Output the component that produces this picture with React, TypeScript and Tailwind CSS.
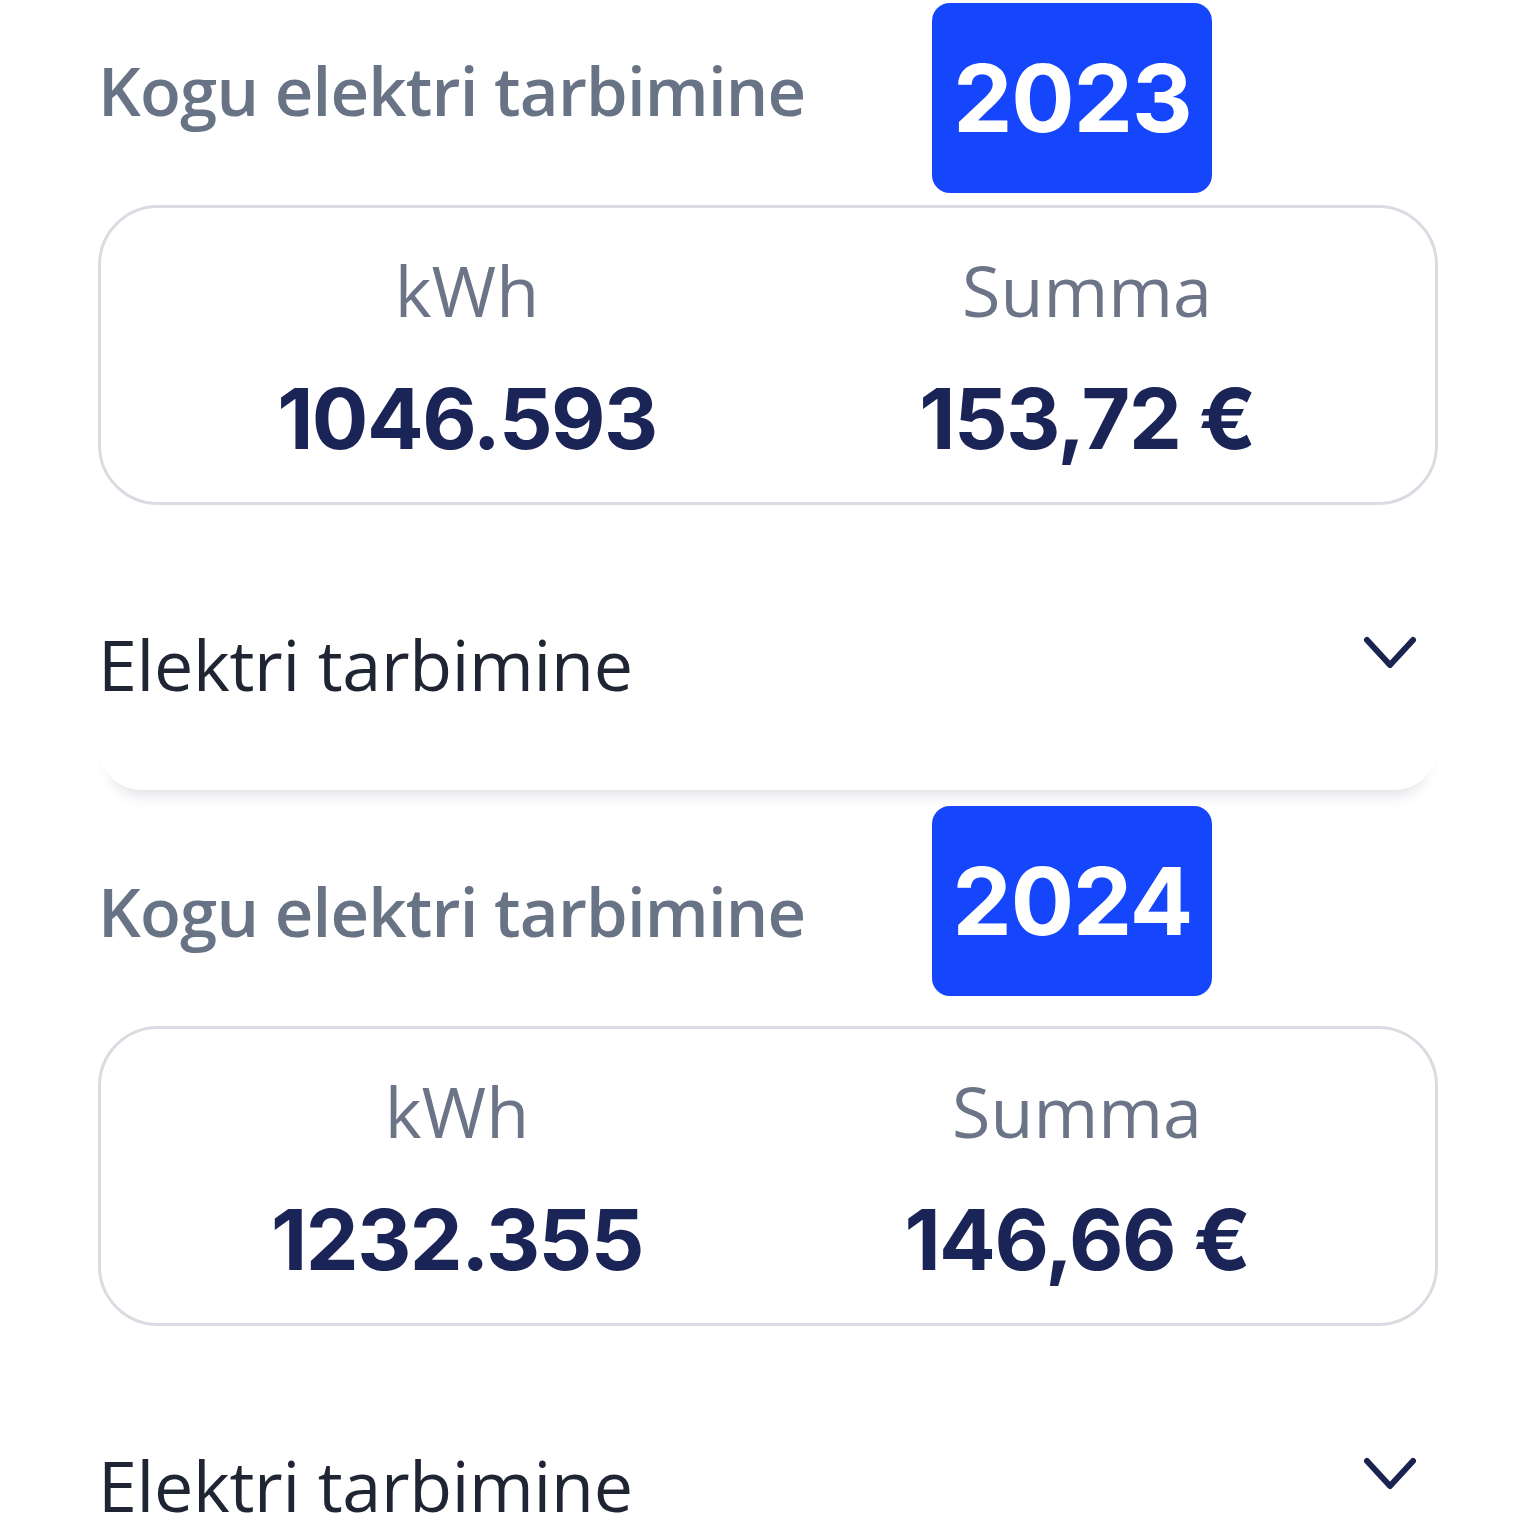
import React from "react";

type Year = {
  year: string;
  kwh: string;
  sum: string;
};

const years: Year[] = [
  { year: "2023", kwh: "1046.593", sum: "153,72 €" },
  { year: "2024", kwh: "1232.355", sum: "146,66 €" },
];

function Chevron() {
  return (
    <svg width="56" height="38" viewBox="0 0 56 38" fill="none" className="block">
      <polyline
        points="5,5 28,30 51,5"
        stroke="#1b2350"
        strokeWidth="6"
        strokeLinecap="round"
        strokeLinejoin="round"
      />
    </svg>
  );
}

function YearBlock({ data, first }: { data: Year; first: boolean }) {
  return (
    <div className={`px-[98px] ${first ? "pt-[3px]" : "pt-[16px]"}`}>
      <div className="flex items-center h-[190px]">
        <h2
          className={`text-[67px] font-semibold text-[#687386] leading-none tracking-[-0.8px] ${
            first ? "mt-[-16px]" : "mt-[20px]"
          }`}
        >
          Kogu elektri tarbimine
        </h2>
        <div className="ml-[127px] w-[280px] h-[190px] rounded-[18px] bg-[#1646fb] flex items-center justify-center">
          <span className="font-['Inter'] text-[94px] font-bold text-white leading-none tracking-[-1px]">
            {data.year}
          </span>
        </div>
      </div>

      <div
        className={`${
          first ? "mt-[12px] pl-[56px] pr-[38px]" : "mt-[30px] pl-[46px] pr-[48px]"
        } h-[300px] rounded-[60px] border-[3px] border-[#d9dce2] grid grid-cols-2 pt-[47px]`}
      >
        <div className="flex flex-col items-center">
          <span className="text-[70px] text-[#6b7587] leading-none">kWh</span>
          <span className="mt-[52px] font-['Inter'] text-[84px] font-bold text-[#1a2456] leading-none tracking-[-1.5px]">
            {data.kwh}
          </span>
        </div>
        <div className="flex flex-col items-center">
          <span className="text-[70px] text-[#6b7587] leading-none">Summa</span>
          <span className="mt-[52px] font-['Inter'] text-[84px] font-bold text-[#1a2456] leading-none tracking-[-1.5px]">
            {data.sum}
          </span>
        </div>
      </div>

      <div
        className={`bg-white rounded-b-[44px] ${
          first ? "shadow-[0_18px_14px_-12px_rgba(30,40,80,0.13)]" : ""
        }`}
      >
        <div className="flex items-start justify-between pt-[124px] pb-[91px]">
          <span className="text-[70px] text-[#1f2532] leading-none tracking-[-0.3px]">
            Elektri tarbimine
          </span>
          <div className="mr-[20px] mt-[6px]">
            <Chevron />
          </div>
        </div>
      </div>
    </div>
  );
}

export default function App() {
  return (
    <div className="w-[1536px] h-[1536px] overflow-hidden bg-white font-['Open_Sans',sans-serif]">
      {years.map((y, i) => (
        <YearBlock key={y.year} data={y} first={i === 0} />
      ))}
    </div>
  );
}
